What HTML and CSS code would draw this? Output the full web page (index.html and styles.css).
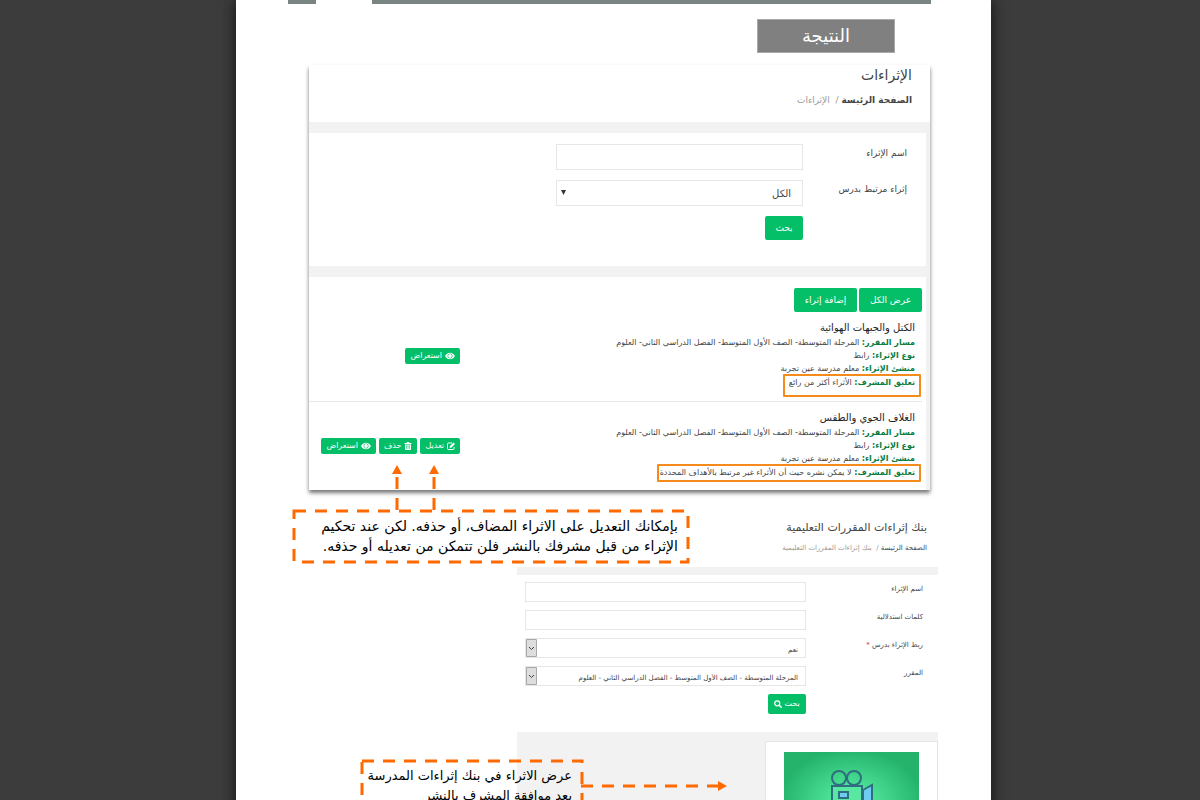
FILE: index.html
```
<html lang="ar" dir="rtl">
<head>
    <meta charset="UTF-8">
    <meta name="viewport" content="width=device-width, initial-scale=1.0">
    <title>النتيجة</title>
    <link rel="stylesheet" href="styles.css">
</head>
<body>
    <!-- icons used on the buttons -->
    <svg class="sprite">
      <symbol id="eye" viewBox="0 0 18 12">
        <path fill="#fff" fill-rule="evenodd" d="M9 0C5 0 2 2.5 0 6c2 3.5 5 6 9 6s7-2.5 9-6C16 2.5 13 0 9 0zM9 1.5a4.5 4.5 0 1 1 0 9 4.5 4.5 0 0 1 0-9z"/>
        <circle cx="9" cy="6" r="3.4" fill="#fff"/>
      </symbol>
      <symbol id="trash" viewBox="0 0 14 16">
        <path fill="#fff" fill-rule="evenodd" d="M0 2h4l1-2h4l1 2h4v2H0zM1 5h12v9a2 2 0 0 1-2 2H3a2 2 0 0 1-2-2zM3.6 6.5v7h1.2v-7zM6.4 6.5v7h1.2v-7zM9.2 6.5v7h1.2v-7z"/>
      </symbol>
      <symbol id="edit" viewBox="0 0 16 16">
        <path fill="none" stroke="#fff" stroke-width="2" d="M10 2H3a2 2 0 0 0-2 2v9a2 2 0 0 0 2 2h9a2 2 0 0 0 2-2v-3"/>
        <path fill="#fff" d="M5 12l1-4 7-7 3 3-7 7z"/>
      </symbol>
      <symbol id="find" viewBox="0 0 16 16">
        <circle cx="6.5" cy="6.5" r="5" fill="none" stroke="#fff" stroke-width="2.5"/>
        <path stroke="#fff" stroke-width="3" stroke-linecap="round" d="M10.5 10.5l4 4"/>
      </symbol>
    </svg>

    <div class="viewer">
      <div class="sheet">
        <div class="strip"><span class="strip-long"></span><span class="strip-short"></span></div>
        <h1 class="result">النتيجة</h1>

        <!-- first screen -->
        <div class="panel">
          <div class="panel-head">
            <h2>الإثراءات</h2>
            <p class="crumbs"><a href="#">الصفحة الرئيسة</a> <span>/ &nbsp;الإثراءات</span></p>
          </div>
          <form class="card search">
            <label for="name1">اسم الإثراء</label>
            <input type="text" id="name1">
            <label for="lesson1">إثراء مرتبط بدرس</label>
            <select id="lesson1"><option>الكل</option></select>
            <button type="button" class="btn">بحث</button>
          </form>
          <div class="card list">
            <div class="tools">
              <button class="btn">عرض الكل</button>
              <button class="btn">إضافة إثراء</button>
            </div>
            <div class="item">
              <div class="info">
                <h3>الكتل والجبهات الهوائية</h3>
                <p><b>مسار المقرر:</b> المرحلة المتوسطة- الصف الأول المتوسط- الفصل الدراسي الثاني- العلوم</p>
                <p><b>نوع الإثراء:</b> رابط</p>
                <p><b>منشئ الإثراء:</b> معلم مدرسة عين تجربة</p>
                <p class="comment tall"><b>تعليق المشرف:</b> الأثراء أكثر من رائع</p>
              </div>
              <div class="actions">
                <button class="btn small"><svg class="eye"><use href="#eye"/></svg>استعراض</button>
              </div>
            </div>
            <div class="item">
              <div class="info">
                <h3>الغلاف الجوي والطقس</h3>
                <p><b>مسار المقرر:</b> المرحلة المتوسطة- الصف الأول المتوسط- الفصل الدراسي الثاني- العلوم</p>
                <p><b>نوع الإثراء:</b> رابط</p>
                <p><b>منشئ الإثراء:</b> معلم مدرسة عين تجربة</p>
                <p class="comment"><b>تعليق المشرف:</b> لا يمكن نشره حيث أن الأثراء غير مرتبط بالأهداف المحددة</p>
              </div>
              <div class="actions">
                <button class="btn small"><svg><use href="#edit"/></svg>تعديل</button>
                <button class="btn small"><svg><use href="#trash"/></svg>حذف</button>
                <button class="btn small"><svg class="eye"><use href="#eye"/></svg>استعراض</button>
              </div>
            </div>
          </div>
        </div>

        <!-- second screen -->
        <div class="bank">
          <div class="bank-head">
            <h2>بنك إثراءات المقررات التعليمية</h2>
            <p class="crumbs"><a href="#">الصفحة الرئيسة</a> <span>/ &nbsp;بنك إثراءات المقررات التعليمية</span></p>
          </div>
          <form class="bank-form">
            <label for="name2">اسم الإثراء</label>
            <input type="text" id="name2">
            <label for="words2">كلمات استدلالية</label>
            <input type="text" id="words2">
            <label for="link2">ربط الإثراء بدرس <i>*</i></label>
            <select id="link2"><option>نعم</option></select>
            <label for="course2">المقرر</label>
            <select id="course2"><option>المرحلة المتوسطة - الصف الأول المتوسط - الفصل الدراسي الثاني - العلوم</option></select>
            <button type="button" class="btn">بحث<svg><use href="#find"/></svg></button>
          </form>
          <div class="results">
            <div class="tile">
              <div class="thumb">
                <svg viewBox="0 0 44 44" fill="none" stroke="#2f6d80" stroke-width="2">
                  <circle cx="9" cy="8" r="7"/><circle cx="24" cy="8" r="7"/>
                  <path fill="#58e8a2" d="M2 16h30v24H2z"/>
                  <path fill="#6fccf0" d="M9 22h9v6H9zM33 20l9-5v24l-9-5z"/>
                </svg>
              </div>
            </div>
          </div>
        </div>

        <!-- notes and arrows over the screens -->
        <div class="note note-edit">
          <svg class="frame"><rect x="1" y="1" width="394" height="51"/></svg>
          <p>بإمكانك التعديل على الاثراء المضاف، أو حذفه. لكن عند تحكيم<br>الإثراء من قبل مشرفك بالنشر فلن تتمكن من تعديله أو حذفه.</p>
        </div>
        <svg class="arrows-up" viewBox="0 0 50 45">
          <path class="dash" d="M6 45V9M43 45V9"/>
          <path class="tip" d="M6 0l5 9H1zM43 0l5 9H38z"/>
        </svg>
        <div class="note note-bank">
          <svg class="frame"><rect x="1" y="1" width="220" height="70"/></svg>
          <p>عرض الاثراء في بنك إثراءات المدرسة<br>بعد موافقة المشرف بالنشر</p>
        </div>
        <svg class="arrow-side" viewBox="0 0 146 10">
          <path class="dash" d="M0 5h137"/>
          <path class="tip" d="M146 5l-9 5V0z"/>
        </svg>
      </div>
    </div>
</body>
</html>
```
FILE: styles.css
```
* {
  box-sizing: border-box;
}

body {
  margin: 0;
  background-color: #3c3c3c;
  font-family: "DejaVu Sans", sans-serif;
  color: #444;
}

h1, h2, h3, p, form {
  margin: 0;
}

.sprite {
  display: none;
}

.viewer {
  display: flex;
  justify-content: center;
  height: 100vh;
  overflow: hidden;
  padding-left: 27px;
}

.sheet {
  position: relative;
  width: 100%;
  max-width: 755px;
  height: max-content;
  padding: 0 53px 0 52px;
  background-color: #fff;
  box-shadow: 0 0 14px #111;
}

.strip {
  display: flex;
  gap: 56px;
  margin-right: 7px;
}

.strip span {
  height: 4px;
  background-color: #7a8583;
}

.strip-long {
  flex: 1;
}

.strip-short {
  width: 28px;
}

.result {
  width: 138px;
  margin: 15px 43px 12px 0;
  border: 1px solid #aaa;
  background-color: #808080;
  color: #fff;
  font-size: 18px;
  font-weight: normal;
  line-height: 32px;
  text-align: center;
}

/* First screen */
.panel {
  margin: 0 8px 0 21px;
  padding-right: 4px;
  background-color: #f2f2f2;
  box-shadow: 0 3px 4px #777;
}

.panel-head {
  height: 57px;
  margin-right: -4px;
  padding-right: 18px;
  background-color: #fff;
}

h2 {
  font-size: 14px;
  font-weight: normal;
  line-height: 20px;
}

.crumbs {
  font-size: 9px;
  line-height: 14px;
}

.crumbs a {
  color: #444;
  text-decoration: none;
}

.crumbs span {
  color: #999;
}

.panel .crumbs {
  margin-top: 8px;
}

.panel .crumbs a {
  font-weight: bold;
}

.card {
  margin-top: 11px;
  background-color: #fff;
}

.search {
  display: grid;
  grid-template-columns: 104px 247px;
  align-items: start;
  align-content: start;
  row-gap: 10px;
  height: 133px;
  padding: 11px 19px;
  font-size: 9px;
}

.search label {
  line-height: 18px;
}

input,
select {
  width: 100%;
  height: 26px;
  border: 1px solid #e6e6e6;
  background-color: #fff;
  font-family: inherit;
  font-size: 10px;
  color: #444;
}

select {
  appearance: none;
  padding: 0 11px;
}

.search select {
  background: #fff url("data:image/svg+xml,%3Csvg xmlns='http://www.w3.org/2000/svg' width='5' height='5'%3E%3Cpath d='M0 0h5L2.5 5z' fill='%23333'/%3E%3C/svg%3E") no-repeat 4px 9px;
}

.btn {
  border: 0;
  border-radius: 2px;
  padding: 0 9px;
  background-color: #04bf68;
  color: #fff;
  font-family: inherit;
  font-size: 9px;
  line-height: 24px;
  white-space: nowrap;
  cursor: pointer;
}

.search .btn,
.bank-form .btn {
  grid-column: 2;
  justify-self: start;
  width: 38px;
}

.list {
  padding: 11px 4px 0 0;
}

.tools {
  display: flex;
  gap: 2px;
}

.tools .btn {
  width: 63px;
  padding: 0;
}

.item {
  display: flex;
  justify-content: space-between;
  align-items: flex-start;
  height: 89px;
  padding: 8px 7px 0 0;
}

.item + .item {
  border-top: 1px solid #e8e8e8;
}

.info h3 {
  color: #222;
  font-size: 10px;
  font-weight: normal;
  line-height: 16px;
}

.info p {
  font-size: 8px;
  line-height: 13px;
}

.info b {
  color: #087c3e;
}

.info .comment {
  width: fit-content;
  margin: -1px -6px 0 0;
  padding: 0 4px 1px 1px;
  border: 2px solid #f58a1d;
  border-radius: 1px;
}

.info .tall {
  padding: 0 4px 6px 4px;
}

.actions {
  display: flex;
  gap: 3px;
  width: 151px;
  margin-top: 28px;
}

.small {
  padding: 0 5px;
  font-size: 8px;
  line-height: 16px;
}

.btn svg {
  width: 8px;
  height: 8px;
  margin-left: 3px;
  vertical-align: middle;
}

.btn .eye {
  width: 10px;
}

/* Second screen */
.bank {
  margin: 28px 0 0 229px;
}

.bank-head {
  height: 57px;
  padding-right: 11px;
  border-bottom: 8px solid #f2f2f2;
}

.bank h2 {
  font-size: 11px;
}

.bank .crumbs {
  margin-top: 3px;
  font-size: 7px;
}

.bank-form {
  display: grid;
  grid-template-columns: 117px 281px;
  align-items: start;
  row-gap: 8px;
  padding: 7px 15px 18px 0;
  font-size: 7px;
}

.bank-form label {
  line-height: 14px;
}

.bank-form input,
.bank-form select {
  height: 20px;
  font-size: 7px;
}

.bank-form select {
  padding: 3px 7px 0 7px;
  background: #fff url("data:image/svg+xml,%3Csvg xmlns='http://www.w3.org/2000/svg' width='11' height='18'%3E%3Cpath d='M.5.5h10v17H.5z' fill='%23ddd' stroke='%23aaa'/%3E%3Cpath d='M3 8l2.5 2.5L8 8' fill='none' stroke='%23444'/%3E%3C/svg%3E") no-repeat left center;
}

.bank-form .btn {
  display: flex;
  align-items: center;
  justify-content: center;
  gap: 2px;
  padding: 0;
  font-size: 8px;
  line-height: 20px;
}

.bank-form .btn svg {
  margin: 0;
}

.bank-form i {
  color: #c33;
}

.results {
  height: 168px;
  padding-top: 9px;
  background-color: #f2f2f3;
}

.tile {
  width: 173px;
  height: 159px;
  padding: 10px 18px;
  border: 1px solid #e4e4e4;
  background-color: #fff;
}

.thumb {
  height: 100px;
  padding-top: 18px;
  background: radial-gradient(#5cf5a9, #25b36b 75%);
  text-align: center;
}

.thumb svg {
  width: 44px;
  height: 44px;
}

/* Notes */
.note {
  position: absolute;
  padding: 6px 11px;
  color: #000;
  font-size: 14px;
  line-height: 20px;
  white-space: nowrap;
}

.note-edit {
  top: 510px;
  left: 57px;
  width: 396px;
}

.note-bank {
  top: 760px;
  left: 125px;
  width: 222px;
  font-size: 13px;
}

.frame {
  position: absolute;
  inset: 0;
  width: 100%;
  height: 100%;
  overflow: visible;
}

.frame rect,
.dash {
  fill: none;
  stroke: #ff6a00;
  stroke-width: 3;
  stroke-dasharray: 12 9;
}

.tip {
  fill: #ff6a00;
}

.arrows-up {
  position: absolute;
  top: 465px;
  left: 155px;
  width: 50px;
}

.arrow-side {
  position: absolute;
  top: 781px;
  left: 345px;
  width: 146px;
}
```
